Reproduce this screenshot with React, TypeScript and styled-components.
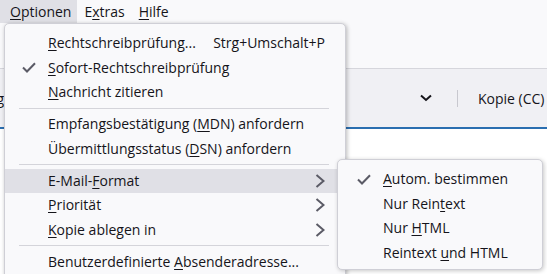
import styled, { createGlobalStyle } from "styled-components";

const GlobalStyle = createGlobalStyle`
  html, body {
    margin: 0;
    padding: 0;
  }
  body {
    font-family: "Open Sans", "Noto Sans", sans-serif;
    font-size: 14px;
    color: #15141a;
    background: #ffffff;
  }
`;

type Entry =
  | { kind: "sep" }
  | {
      kind: "item";
      label: string;
      key: number;
      checked?: boolean;
      active?: boolean;
      shortcut?: string;
      submenu?: boolean;
    };

const mainMenu: Entry[] = [
  { kind: "item", label: "Rechtschreibprüfung...", key: 0, shortcut: "Strg+Umschalt+P" },
  { kind: "item", label: "Sofort-Rechtschreibprüfung", key: 0, checked: true },
  { kind: "item", label: "Nachricht zitieren", key: 0 },
  { kind: "sep" },
  { kind: "item", label: "Empfangsbestätigung (MDN) anfordern", key: 21 },
  { kind: "item", label: "Übermittlungsstatus (DSN) anfordern", key: 21 },
  { kind: "sep" },
  { kind: "item", label: "E-Mail-Format", key: 7, active: true, submenu: true },
  { kind: "item", label: "Priorität", key: 0, submenu: true },
  { kind: "item", label: "Kopie ablegen in", key: 0, submenu: true },
  { kind: "sep" },
  { kind: "item", label: "Benutzerdefinierte Absenderadresse...", key: 19 },
];

const formatMenu: Entry[] = [
  { kind: "item", label: "Autom. bestimmen", key: 0, checked: true },
  { kind: "item", label: "Nur Reintext", key: 8 },
  { kind: "item", label: "Nur HTML", key: 4 },
  { kind: "item", label: "Reintext und HTML", key: 9 },
];

function AccessLabel({ text, at }: { text: string; at: number }) {
  return (
    <>
      {text.slice(0, at)}
      <u>{text.charAt(at)}</u>
      {text.slice(at + 1)}
    </>
  );
}

function Check() {
  return (
    <svg width="14" height="11" viewBox="0 0 14 11">
      <path d="M1 5.5 L5 9.5 L13 1.2" fill="none" stroke="#5b5b66" strokeWidth="2" />
    </svg>
  );
}

function Chevron() {
  return (
    <svg width="10" height="14" viewBox="0 0 10 14">
      <path d="M1.5 1 L8.5 7 L1.5 13" fill="none" stroke="#5b5b66" strokeWidth="2" />
    </svg>
  );
}

function MenuList({ entries, wide }: { entries: Entry[]; wide?: boolean }) {
  return (
    <>
      {entries.map((entry, index) =>
        entry.kind === "sep" ? (
          <Separator key={index} />
        ) : (
          <Row key={index} $active={entry.active} $wide={wide}>
            <CheckCell>{entry.checked && <Check />}</CheckCell>
            <Label>
              <AccessLabel text={entry.label} at={entry.key} />
            </Label>
            <Trail>
              {entry.shortcut}
              {entry.submenu && <Chevron />}
            </Trail>
          </Row>
        )
      )}
    </>
  );
}

export default function App() {
  return (
    <>
      <GlobalStyle />
      <Page>
        <TopArea>
          <MenuBar>
            <BarItem $open>
              <AccessLabel text="Optionen" at={0} />
            </BarItem>
            <BarItem>
              <AccessLabel text="Extras" at={1} />
            </BarItem>
            <BarItem>
              <AccessLabel text="Hilfe" at={0} />
            </BarItem>
          </MenuBar>
        </TopArea>
        <Toolbar>
          <ToolLeft>
            <CutLabel>Anhang</CutLabel>
          </ToolLeft>
          <svg width="12" height="8" viewBox="0 0 12 8">
            <path d="M1 1.5 L6 6 L11 1.5" fill="none" stroke="#15141a" strokeWidth="2" />
          </svg>
          <ToolDivider />
          <ToolText>Kopie (CC)</ToolText>
        </Toolbar>
        <Composer />

        <Popup>
          <MenuList entries={mainMenu} wide />
        </Popup>
        <SubPopup>
          <MenuList entries={formatMenu} />
        </SubPopup>
      </Page>
    </>
  );
}

const Page = styled.div`
  position: relative;
  width: 547px;
  height: 274px;
  overflow: hidden;
  display: flex;
  flex-direction: column;
  background: #ffffff;
`;

const TopArea = styled.div`
  height: 68px;
  background: #f9f9fb;
  flex-shrink: 0;
`;

const MenuBar = styled.div`
  display: flex;
  height: 23px;
  align-items: stretch;
`;

const BarItem = styled.div<{ $open?: boolean }>`
  display: flex;
  align-items: center;
  padding: 0 7px;
  background: ${(p) => (p.$open ? "#e0e0e6" : "transparent")};
  line-height: 1;

  &:first-child {
    padding-left: 10px;
    padding-right: 6px;
  }

  u {
    text-decoration-thickness: 1px;
    text-underline-offset: 2px;
  }
`;

const Toolbar = styled.div`
  height: 58px;
  flex-shrink: 0;
  display: flex;
  align-items: center;
  background: #f0f0f4;
  border-top: 1px solid #d6d6dc;
  border-bottom: 2px solid #2a6eb0;
  white-space: nowrap;
`;

const ToolLeft = styled.div`
  flex: 0 0 420px;
  display: flex;
  overflow: hidden;
`;

const CutLabel = styled.div`
  width: 4px;
  display: flex;
  justify-content: flex-end;
  overflow: hidden;
`;

const ToolDivider = styled.div`
  width: 1px;
  height: 17px;
  background: #c8c8cf;
  margin: 0 20px 0 25px;
  flex-shrink: 0;
`;

const ToolText = styled.div`
  flex-shrink: 0;
`;

const Composer = styled.div`
  flex: 1;
  background: #ffffff;
`;

const Popup = styled.div`
  position: absolute;
  left: 4px;
  top: 23px;
  width: 342px;
  height: 270px;
  box-sizing: border-box;
  padding-top: 7px;
  background: #f9f9fb;
  border: 1px solid #cfcfd6;
  border-radius: 5px;
  box-shadow: 1px 1px 4px rgba(0, 0, 0, 0.28);
`;

const SubPopup = styled.div`
  position: absolute;
  left: 337px;
  top: 159px;
  width: 206px;
  height: 111px;
  box-sizing: border-box;
  padding-top: 7px;
  background: #f9f9fb;
  border: 1px solid #cfcfd6;
  border-radius: 5px;
  box-shadow: 1px 1px 4px rgba(0, 0, 0, 0.22);
`;

const Row = styled.div<{ $active?: boolean; $wide?: boolean }>`
  display: grid;
  grid-template-columns: ${(p) => (p.$wide ? "43px" : "45px")} 1fr auto;
  align-items: center;
  height: 24.5px;
  padding-right: 20px;
  background: ${(p) => (p.$active ? "#e0e0e6" : "transparent")};
  white-space: nowrap;
  line-height: 1;

  u {
    text-decoration-thickness: 1px;
    text-underline-offset: 2px;
  }
`;

const CheckCell = styled.div`
  display: flex;
  justify-content: flex-end;
  padding-right: 12px;
`;

const Label = styled.div``;

const Trail = styled.div`
  display: flex;
  align-items: center;
`;

const Separator = styled.div`
  height: 1px;
  background: #d4d4da;
  margin: 3px 16px 3.5px 14px;
`;
